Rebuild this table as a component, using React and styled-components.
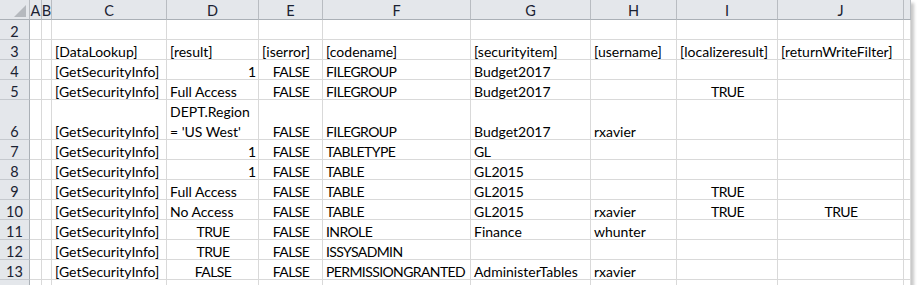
import React from "react";
import styled, { createGlobalStyle } from "styled-components";

const GlobalStyle = createGlobalStyle`
  html, body {
    margin: 0;
    padding: 0;
    background: #ffffff;
  }
  body {
    font-family: Lato, "Open Sans", sans-serif;
  }
`;

const COLS = [30, 12, 10, 115, 92, 64, 148, 120, 86, 101, 126, 7];
const LETTERS = ["A", "B", "C", "D", "E", "F", "G", "H", "I", "J", ""];

const Frame = styled.div`
  width: 911px;
  height: 285px;
  overflow: hidden;
  background: #fff;
  box-shadow: 3px 3px 3px rgba(0, 0, 0, 0.22);
`;

const Grid = styled.div`
  display: grid;
  grid-template-columns: ${COLS.map((w) => w + "px").join(" ")};
  grid-auto-rows: 20px;
`;

const HeadCell = styled.div`
  box-sizing: border-box;
  background: #e4e7eb;
  border-right: 1px solid #b8bcc1;
  border-bottom: 1px solid #aab0b6;
  color: #1a2232;
  font-size: 14.5px;
  display: flex;
  align-items: center;
  justify-content: center;
  padding-top: 1px;
  overflow: hidden;
`;

const Corner = styled(HeadCell)`
  position: relative;
  &::after {
    content: "";
    position: absolute;
    right: 3px;
    bottom: 2px;
    width: 0;
    height: 0;
    border-left: 12px solid transparent;
    border-bottom: 12px solid #b5b9be;
  }
`;

const RowHead = styled(HeadCell)`
  grid-row: span ${(p) => p.$span || 1};
  border-bottom: 1px solid #c5c9ce;
  border-right: 1px solid #aab0b6;
  align-items: flex-end;
  line-height: 15px;
  padding: 0;
`;

const Cell = styled.div`
  box-sizing: border-box;
  grid-row: span ${(p) => p.$span || 1};
  border-right: 1px solid #d9d9d9;
  border-bottom: 1px solid #d9d9d9;
  font-size: 14px;
  line-height: 15px;
  color: #000;
  padding: 0 2px 0 3px;
  display: flex;
  flex-direction: column;
  justify-content: flex-end;
  gap: 5px;
  text-align: ${(p) => p.$align || "left"};
  white-space: nowrap;
  overflow: visible;
`;

const Text = styled.span`
  letter-spacing: ${(p) => (p.$caps ? "-0.6px" : "0")};
`;

// each row: [rowNumber, height-span, {col: [text, align]}]
const rows = [
  [2, 1, {}],
  [3, 1, {
    C: ["[DataLookup]"], D: ["[result]"], E: ["[iserror]"], F: ["[codename]"],
    G: ["[securityitem]"], H: ["[username]"], I: ["[localizeresult]"], J: ["[returnWriteFilter]"],
  }],
  [4, 1, { D: ["1", "right"], E: ["FALSE", "center"], F: ["FILEGROUP"], G: ["Budget2017"] }],
  [5, 1, { D: ["Full Access"], E: ["FALSE", "center"], F: ["FILEGROUP"], G: ["Budget2017"], I: ["TRUE", "center"] }],
  [6, 2, { D: ["DEPT.Region\n= 'US West'"], E: ["FALSE", "center"], F: ["FILEGROUP"], G: ["Budget2017"], H: ["rxavier"] }],
  [7, 1, { D: ["1", "right"], E: ["FALSE", "center"], F: ["TABLETYPE"], G: ["GL"] }],
  [8, 1, { D: ["1", "right"], E: ["FALSE", "center"], F: ["TABLE"], G: ["GL2015"] }],
  [9, 1, { D: ["Full Access"], E: ["FALSE", "center"], F: ["TABLE"], G: ["GL2015"], I: ["TRUE", "center"] }],
  [10, 1, { D: ["No Access"], E: ["FALSE", "center"], F: ["TABLE"], G: ["GL2015"], H: ["rxavier"], I: ["TRUE", "center"], J: ["TRUE", "center"] }],
  [11, 1, { D: ["TRUE", "center"], E: ["FALSE", "center"], F: ["INROLE"], G: ["Finance"], H: ["whunter"] }],
  [12, 1, { D: ["TRUE", "center"], E: ["FALSE", "center"], F: ["ISSYSADMIN"] }],
  [13, 1, { D: ["FALSE", "center"], E: ["FALSE", "center"], F: ["PERMISSIONGRANTED"], G: ["AdministerTables"], H: ["rxavier"] }],
  [null, 1, {}],
];

const GET = "[GetSecurityInfo]";

export default function App() {
  return (
    <>
      <GlobalStyle />
      <Frame>
        <Grid>
          <Corner />
          {LETTERS.map((l, i) => (
            <HeadCell key={"h" + i}>{l}</HeadCell>
          ))}
          {rows.map(([num, span, data], r) => {
            const cells = { ...data };
            if (num >= 4 && num <= 13) cells.C = [GET];
            return (
              <React.Fragment key={r}>
                <RowHead $span={span}>{num}</RowHead>
                {LETTERS.map((l, i) => {
                  const c = cells[l];
                  const lines = c ? c[0].split("\n") : [];
                  return (
                    <Cell key={r + "-" + i} $span={span} $align={c && c[1]}>
                      {lines.map((t, k) => (
                        <Text key={k} $caps={/^[A-Z]+$/.test(t)}>
                          {t}
                        </Text>
                      ))}
                    </Cell>
                  );
                })}
              </React.Fragment>
            );
          })}
        </Grid>
      </Frame>
    </>
  );
}
